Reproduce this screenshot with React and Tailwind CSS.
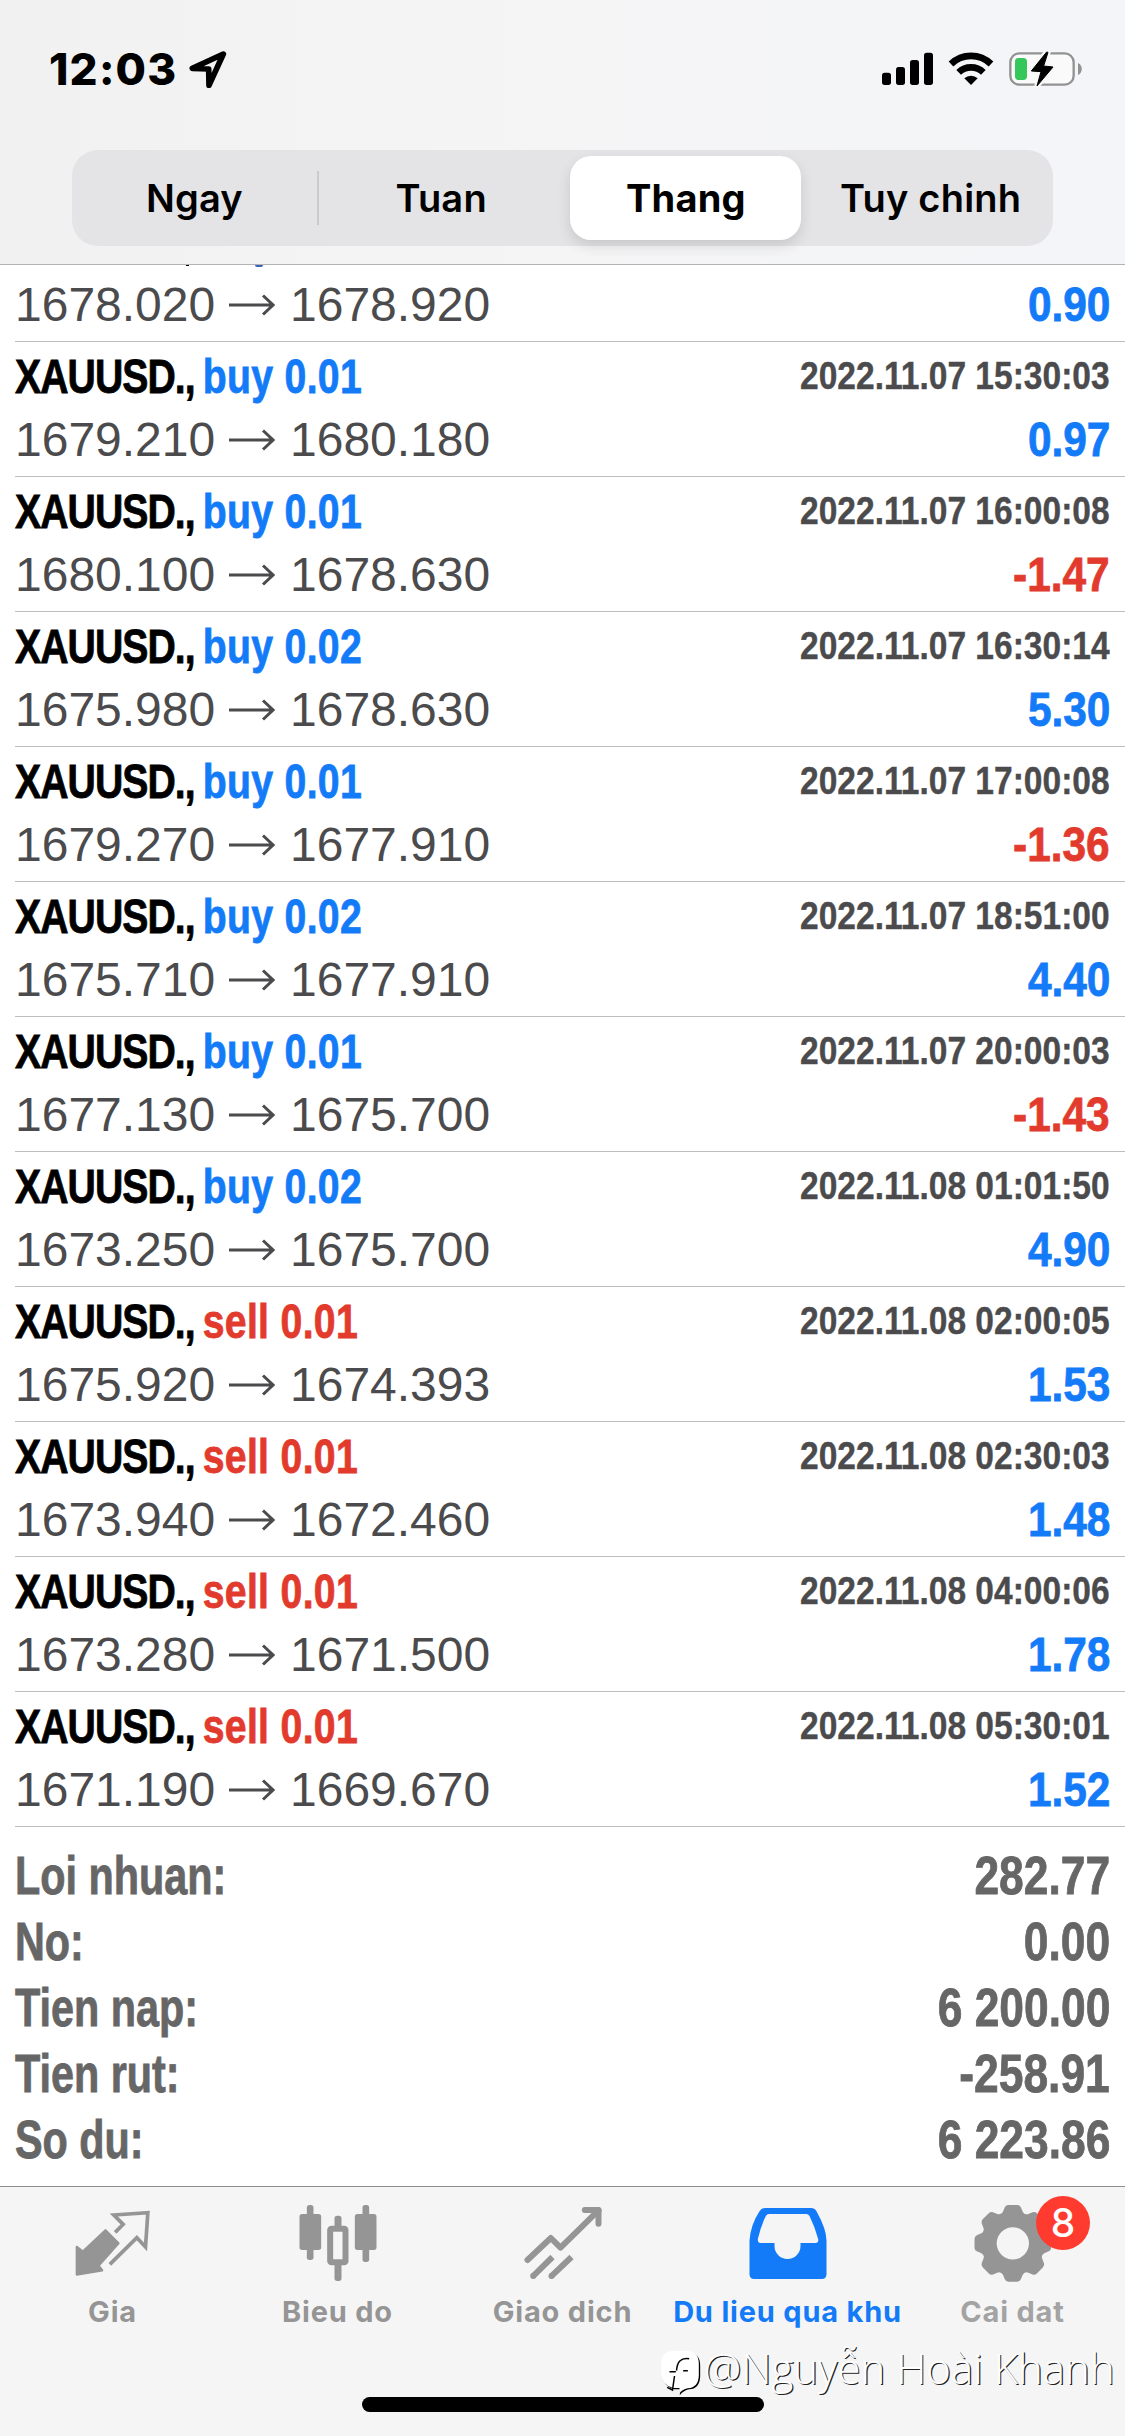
const trades = [
  { side: 'buy', lot: '0.01', time: '2022.11.07 15:30:03', open: '1679.210', close: '1680.180', profit: '0.97' },
  { side: 'buy', lot: '0.01', time: '2022.11.07 16:00:08', open: '1680.100', close: '1678.630', profit: '-1.47' },
  { side: 'buy', lot: '0.02', time: '2022.11.07 16:30:14', open: '1675.980', close: '1678.630', profit: '5.30' },
  { side: 'buy', lot: '0.01', time: '2022.11.07 17:00:08', open: '1679.270', close: '1677.910', profit: '-1.36' },
  { side: 'buy', lot: '0.02', time: '2022.11.07 18:51:00', open: '1675.710', close: '1677.910', profit: '4.40' },
  { side: 'buy', lot: '0.01', time: '2022.11.07 20:00:03', open: '1677.130', close: '1675.700', profit: '-1.43' },
  { side: 'buy', lot: '0.02', time: '2022.11.08 01:01:50', open: '1673.250', close: '1675.700', profit: '4.90' },
  { side: 'sell', lot: '0.01', time: '2022.11.08 02:00:05', open: '1675.920', close: '1674.393', profit: '1.53' },
  { side: 'sell', lot: '0.01', time: '2022.11.08 02:30:03', open: '1673.940', close: '1672.460', profit: '1.48' },
  { side: 'sell', lot: '0.01', time: '2022.11.08 04:00:06', open: '1673.280', close: '1671.500', profit: '1.78' },
  { side: 'sell', lot: '0.01', time: '2022.11.08 05:30:01', open: '1671.190', close: '1669.670', profit: '1.52' },
];

const summary = [
  ['Loi nhuan:', '282.77'],
  ['No:', '0.00'],
  ['Tien nap:', '6 200.00'],
  ['Tien rut:', '-258.91'],
  ['So du:', '6 223.86'],
];

function StatusBar() {
  return (
    <div className="flex h-[150px] items-start justify-between pl-[49px] pr-[43px] pt-[51px]">
      <div className="flex items-start">
        <span className="w-[140px] whitespace-nowrap text-[44px] font-extrabold leading-[37px] tracking-[1.2px] text-black">12:03</span>
        <svg className="h-[37px] w-[38px]" viewBox="567 92 114 111" fill="none" stroke="#000" strokeWidth="17" strokeLinejoin="round">
          <path d="M670 101 L577 144 L626 146 L627 195 Z" />
        </svg>
      </div>
      <div className="flex items-start">
        <svg className="h-[37px] w-[200px]" viewBox="126 93 600 111">
          <rect x="126" y="158" width="27" height="37" rx="8" />
          <rect x="168" y="141" width="27" height="54" rx="8" />
          <rect x="210" y="120" width="27" height="75" rx="8" />
          <rect x="252" y="98" width="27" height="97" rx="8" />
          <g fill="none" stroke="#000" strokeWidth="20">
            <path d="M333 132 A86 86 0 0 1 453 132" />
            <path d="M356 157 A53 53 0 0 1 430 157" />
          </g>
          <path d="M393 195 L373 175 A29 29 0 0 1 413 175 Z" />
          <rect x="511" y="100" width="190" height="94" rx="27" fill="#fafafa" stroke="#929293" strokeWidth="7" />
          <rect x="525" y="114" width="36" height="66" rx="11" fill="#34c759" />
          <path d="M714 129 C729 135 729 158 714 165 Z" fill="#929293" />
          <path d="M620 96 L574 153 L603 155 L591 198 L639 141 L611 138 L624 97 Z" stroke="#f7f7f8" strokeWidth="16" strokeLinejoin="round" />
          <path d="M620 96 L574 153 L603 155 L591 198 L639 141 L611 138 L624 97 Z" stroke="#000" strokeWidth="3" strokeLinejoin="round" />
        </svg>
      </div>
    </div>
  );
}

function SegmentedControl() {
  return (
    <div className="mx-[72px] flex h-[96px] w-[981px] items-center rounded-[26px] bg-[#e4e4e6] text-[38px] font-semibold tracking-[0.2px] text-black">
      <div className="flex h-[54px] flex-1 items-center justify-center border-r-2 border-[#cbcbce] pt-px">Ngay</div>
      <div className="flex flex-1 items-center justify-center pt-px">Tuan</div>
      <div className="flex flex-1 justify-center">
        <div className="flex h-[84px] w-[231px] items-center justify-center rounded-[21px] bg-white pt-px font-bold shadow-[0_6px_14px_rgba(0,0,0,0.12)]">
          Thang
        </div>
      </div>
      <div className="flex flex-1 items-center justify-center whitespace-nowrap pt-px">Tuy chinh</div>
    </div>
  );
}

function Prices({ open, close, profit }) {
  return (
    <div className="flex items-center justify-between leading-[54px]">
      <div className="flex items-center text-[48px] text-[#4b4b4d]">
        <span className="w-[214px]">{open}</span>
        <svg className="mr-[15px] h-[22px] w-[46px]" viewBox="0 0 46 22" fill="none" stroke="#4b4b4d" strokeWidth="3">
          <path d="M0 11 H43 M34 1.5 L44 11 L34 20.5" />
        </svg>
        <span>{close}</span>
      </div>
      <span
        className={`origin-right self-start scale-x-[.865] text-[49px] font-bold leading-[52px] [-webkit-text-stroke:0.8px] ${
          profit.startsWith('-') ? 'text-[#e23b2e]' : 'text-[#147bf8]'
        }`}
      >
        {profit}
      </span>
    </div>
  );
}

function Trade({ side, lot, time, ...prices }) {
  return (
    <div className="ml-[15px] h-[135px] border-b border-[#bdbdbf] pr-[15px] pt-[7px]">
      <div className="flex h-[56px] items-center justify-between font-bold">
        <span className="origin-left scale-x-[.8] whitespace-nowrap text-[49px] text-black [-webkit-text-stroke:0.8px]">
          <span className="tracking-[-1.2px]">XAUUSD.,</span>
          <span className={`ml-[10px] tracking-[0.4px] ${side === 'buy' ? 'text-[#147bf8]' : 'text-[#e23b2e]'}`}>{side} {lot}</span>
        </span>
        <span className="origin-right scale-x-[.849] whitespace-nowrap pb-[2px] text-[39.5px] text-[#4b4b4d] [-webkit-text-stroke:0.4px]">{time}</span>
      </div>
      <div className="pt-[8px]">
        <Prices {...prices} />
      </div>
    </div>
  );
}

function Tab({ label, viewBox, tone, labelTone = '', children }) {
  return (
    <div className={`flex w-[225px] flex-col items-center ${tone}`}>
      <svg className="h-[87px] w-[90px]" viewBox={viewBox} fill="currentColor">
        {children}
      </svg>
      <span className={`mt-[7px] whitespace-nowrap text-[29px] font-bold leading-[36px] tracking-[0.8px] ${labelTone}`}>{label}</span>
    </div>
  );
}

function TabBar() {
  return (
    <div className="relative h-[250px] border-t border-[#8e8e90] bg-[#f5f5f5] pt-[13px] font-['Inter',sans-serif]">
      <div className="flex">
        <Tab label="Gia" viewBox="202.5 90 270 261" tone="text-[#959595]">
          <path d="M315 181 L354 220 L294 287 L305 301 L229 314 L229 231 L247 245 Z" stroke="currentColor" strokeWidth="7" strokeLinejoin="round" />
          <path d="M344 187 L368 163 L340 135 L442 128 L435 231 L409 203 L328 283" fill="none" stroke="currentColor" strokeWidth="11" />
        </Tab>
        <Tab label="Bieu do" viewBox="877.5 90 270 261" tone="text-[#959595]">
          <rect x="897" y="132" width="65" height="108" rx="8" />
          <rect x="919" y="105" width="20" height="165" rx="8" />
          <rect x="1063" y="132" width="65" height="108" rx="8" />
          <rect x="1086" y="105" width="20" height="171" rx="8" />
          <rect x="989" y="176" width="46" height="101" rx="4" fill="none" stroke="currentColor" strokeWidth="18" />
          <rect x="1002" y="137" width="21" height="40" rx="8" />
          <rect x="1002" y="280" width="21" height="53" rx="8" />
        </Tab>
        <Tab label="Giao dich" viewBox="352.5 90 270 261" tone="text-[#959595]">
          <g fill="none" stroke="currentColor" strokeWidth="18" strokeLinejoin="round">
            <path d="M381 270 L451 204 L480 233 L594 121" strokeLinecap="round" />
            <path d="M553 120 H594 V161" strokeLinecap="round" />
            <path d="M397 319 L456 261 M452 319 L513 261" />
          </g>
          <circle cx="398" cy="318" r="9" />
          <circle cx="453" cy="318" r="9" />
        </Tab>
        <Tab label="Du lieu qua khu" viewBox="307.5 90 270 261" tone="text-[#147bf8]">
          <path
            fillRule="evenodd"
            d="M374 114 H512 Q522 114 528 124 Q558 178 558 212 V313 Q558 327 544 327 H341 Q327 327 327 313 V212 Q330 165 357 124 Q363 114 374 114 Z M386 132 Q379 132 376 138 Q361 168 352 207 Q351 219 361 219 H402 V228 A39 39 0 0 0 480 228 V219 H525 Q535 219 533 207 Q523 170 507 138 Q504 132 497 132 Z"
          />
        </Tab>
        <Tab label="Cai dat" viewBox="982.5 90 270 261" tone="text-[#959595]" labelTone="text-[#a3a3a3]">
          <circle cx="1117" cy="220" r="72" fill="none" stroke="currentColor" strokeWidth="47" />
          {[0, 45, 90, 135, 180, 225, 270, 315].map((angle) => (
            <path
              key={angle}
              transform={`rotate(${angle} 1117 220)`}
              d="M1078 138 Q1088 128 1093 112 Q1096 105 1104 105 H1130 Q1138 105 1141 112 Q1146 128 1156 138 Z"
            />
          ))}
        </Tab>
      </div>
      <div className="absolute left-[1036px] top-[9px] flex h-[54px] w-[54px] items-center justify-center rounded-full bg-[#ff3b30] text-[39px] font-medium text-white">
        8
      </div>
      <div className="absolute left-[362px] top-[210px] h-[15px] w-[402px] rounded-full bg-black" />
      <Watermark />
    </div>
  );
}

function Watermark() {
  return (
    <div className="absolute left-[660px] top-[156px] flex items-start font-['Open_Sans',sans-serif] text-[42px] leading-[50px] text-white [text-shadow:1.2px_1.2px_0_#222]">
      <svg className="mt-[7px] h-[46px] w-[41px]" viewBox="0 0 120 138">
        <path d="M40 8 H82 Q119 8 119 46 V80 Q117 116 86 118 Q68 122 58 136 L58 118 L40 118 Q8 110 6 72 V42 Q8 8 40 8 Z" fill="#000" />
        <path d="M38 3 H78 Q115 3 115 42 V76 Q114 113 82 115 Q64 118 56 132 L57 114 L38 114 Q4 106 2 68 V38 Q4 3 38 3 Z" fill="#fff" />
        <path d="M86 26 C60 22 50 36 48 62 M27 65 H46 M68 62 H82 M42 78 L36 120 L20 112" fill="none" stroke="#000" strokeWidth="4.5" />
      </svg>
      <span className="ml-[3px] whitespace-nowrap font-light">@Nguyễn Hoài Khanh</span>
    </div>
  );
}

export default function App() {
  return (
    <div className="flex h-[2436px] w-[1125px] flex-col overflow-hidden bg-white font-['Liberation_Sans',Arial,sans-serif]">
      <header className="h-[265px] shrink-0 border-b border-[#b2b2b4] bg-linear-to-r from-[#f1f1f1] via-[#f5f5f6] to-[#f4f5f8] font-['Inter',sans-serif]">
        <StatusBar />
        <SegmentedControl />
      </header>

      <main className="h-[1921px] shrink-0">
        {/* the list is scrolled: only the tails of the first title are left below the header */}
        <div className="ml-[15px] h-[77px] border-b border-[#bdbdbf] pr-[15px]">
          <div className="flex h-[2px] gap-[66px] pl-[171px]">
            <span className="h-px w-[3px] bg-black" />
            <span className="w-[8px] rounded-b-full bg-[#3a62b8]" />
          </div>
          <div className="pt-[11px]">
            <Prices open="1678.020" close="1678.920" profit="0.90" />
          </div>
        </div>
        {trades.map((trade) => (
          <Trade key={trade.time} {...trade} />
        ))}
        <div className="px-[15px] pt-[16px] text-[53px] font-bold leading-[66px] text-[#666] [-webkit-text-stroke:0.8px]">
          {summary.map(([label, value]) => (
            <div key={label} className="flex justify-between">
              <span className="origin-left scale-x-[.78]">{label}</span>
              <span className="origin-right scale-x-[.837]">{value}</span>
            </div>
          ))}
        </div>
      </main>

      <TabBar />
    </div>
  );
}
